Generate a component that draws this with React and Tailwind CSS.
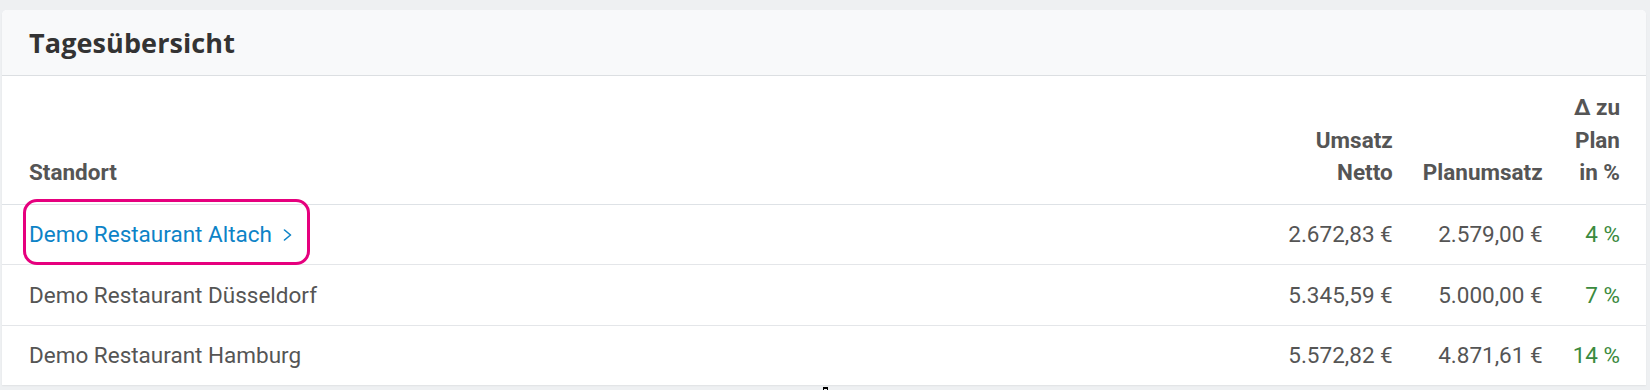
const rows = [
  { name: 'Demo Restaurant Altach', netto: '2.672,83 €', plan: '2.579,00 €', delta: '4 %', link: true },
  { name: 'Demo Restaurant Düsseldorf', netto: '5.345,59 €', plan: '5.000,00 €', delta: '7 %' },
  { name: 'Demo Restaurant Hamburg', netto: '5.572,82 €', plan: '4.871,61 €', delta: '14 %' },
];

export default function App() {
  return (
    <div className="relative min-h-screen bg-[#eef0f2] pl-[2px] pr-[4px] pt-[10px]">
      <div className="relative bg-white rounded-t-[5px] shadow-[0_1px_2px_rgba(0,0,0,0.06)] font-['Roboto',sans-serif]">
        {/* Header */}
        <div className="h-[66px] flex items-center px-[27px] bg-[#f8f9fa] border-b border-[#dcdfe2] rounded-t-[5px]">
          <h2 className="font-['Open_Sans',sans-serif] font-bold text-[27px] leading-none text-[#333] tracking-[0.1px]">Tagesübersicht</h2>
        </div>

        <table className="w-full border-collapse text-[22.5px] leading-[32.5px] text-[#555]">
          <thead>
            <tr className="border-b border-[#dee2e6]">
              <th className="w-full text-left align-bottom pl-[27px] pr-[15px] pt-[15px] pb-[15px] font-bold">Standort</th>
              <th className="text-right align-bottom px-[15px] pt-[15px] pb-[15px] font-bold">Umsatz Netto</th>
              <th className="text-right align-bottom px-[15px] pt-[15px] pb-[15px] font-bold">Planumsatz</th>
              <th className="text-right align-bottom pl-[15px] pr-[26px] pt-[15px] pb-[15px] font-bold">Δ zu Plan in %</th>
            </tr>
          </thead>
          <tbody>
            {rows.map((r, i) => (
              <tr key={r.name} className={i < rows.length - 1 ? 'border-b border-[#e4e6e9]' : ''}>
                <td className="pl-[27px] pr-[15px] py-[13.5px] whitespace-nowrap">
                  {r.link ? (
                    <span className="text-[#0d83c7] inline-flex items-center gap-[11px]">
                      {r.name}
                      <svg width="9" height="12" viewBox="0 0 9 12" fill="none" className="mt-[2px]">
                        <path d="M1.5 1 L7.5 6 L1.5 11" stroke="currentColor" strokeWidth="1.6" strokeLinecap="round" strokeLinejoin="round" />
                      </svg>
                    </span>
                  ) : (
                    r.name
                  )}
                </td>
                <td className="text-right px-[15px] py-[13.5px] whitespace-nowrap">{r.netto}</td>
                <td className="text-right px-[15px] py-[13.5px] whitespace-nowrap">{r.plan}</td>
                <td className="text-right pl-[15px] pr-[26px] py-[13.5px] whitespace-nowrap text-[#3b8a3e]">{r.delta}</td>
              </tr>
            ))}
          </tbody>
        </table>

        {/* Hand-drawn highlight around the first location */}
        <div className="absolute left-[21px] top-[189px] w-[287px] h-[66px] border-[3px] border-[#e6007e] rounded-[14px] pointer-events-none" />
      </div>

      {/* mouse cursor remnant */}
      <div className="absolute left-[823px] top-[387px] w-[5px] h-[3px] border-t-2 border-x border-black" />
    </div>
  );
}
